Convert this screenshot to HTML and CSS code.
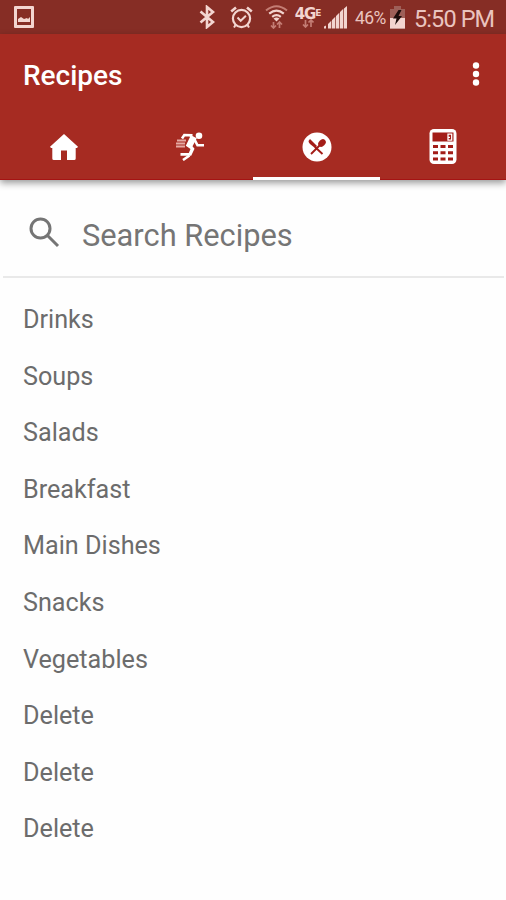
FILE: index.html
```html
<!DOCTYPE html>
<html lang="en">
<head>
<meta charset="utf-8">
<title>Recipes</title>
<link rel="stylesheet" href="styles.css">
</head>
<body>
<div class="status">
  <svg class="pic" width="20" height="22" viewBox="0 0 20 22"><path fill-rule="evenodd" d="M1 0h18q1 0 1 1v20q0 1-1 1H1q-1 0-1-1V1q0-1 1-1zM3 3v16h14V3z"/><path d="M4 16v-3l3-2 3 2 3-1 1 1 2-2v5z"/></svg>
  <svg class="bt" width="16" height="24" viewBox="0 0 16 24"><path class="line" stroke-width="2.600" d="M1.500 6.500 14 17l-6 5V2l6 5L1.500 17.500"/></svg>
  <svg class="alarm" width="23" height="23" viewBox="0 0 23 23"><circle class="line" stroke-width="2.200" cx="11.500" cy="12.500" r="8.600"/><path class="line" stroke-width="2.600" d="M1.200 5.500 6 1.600M21.800 5.500 17 1.600"/><path class="line" stroke-width="2" d="m7.500 11.500 3.200 3.300 5.200-5M5.500 19 4 21.500M17.500 19l1.500 2.500"/></svg>
  <svg class="wifi" width="23" height="24" viewBox="0 0 23 24"><path class="line dim" stroke-width="2" d="M1 5.500Q11.500-3 22 5.500"/><path class="line" stroke-width="2.200" d="M4.200 8.700q7.300-6 14.600 0M7.200 11.800q4.300-3.500 8.600 0"/><path d="m8.500 13.500 3 3 3-3q-3-2-6 0z"/><path class="line dim" stroke-width="1.700" d="M8.500 17v6M6 20.500 8.500 23l2.500-2.500M14.500 23v-6M12 19.500l2.500-2.500 2.500 2.500"/></svg>
  <div class="network">
    <span class="net-label">4G<span class="lte">E</span></span>
    <svg width="12" height="9" viewBox="0 0 12 9"><path class="line dim" stroke-width="1.700" d="M3.500 1v7M1 5.500 3.500 8 6 5.500M9 8V1M6.500 3.500 9 1l2.500 2.500"/></svg>
  </div>
  <svg class="signal" width="23" height="23" viewBox="0 0 23 23"><path d="M0 22.500v-2l2-1v3zM4 22.500V18l3.300-3.200v7.700zM8 22.500V14l3.300-3.200v11.700zM12 22.500V10l3.300-3.200v15.700zM16 22.500V6l3.300-3.200v19.700zM20 22.500V2.500L23 0v22.500z"/></svg>
  <span class="percent">46%</span>
  <svg class="battery" width="15" height="23" viewBox="0 0 15 23"><path class="shell" d="M4 0h7v3h4v20H0V3h4z"/><path d="M0 12h15v10.500H0z"/><path class="bolt" d="M8.500 4 3 12.500h3.500L5 19l7-9H8.500l3-6z"/></svg>
  <span class="time">5:50 PM</span>
</div>
<header class="appbar">
  <div class="titlebar">
    <h1>Recipes</h1>
    <svg width="10" height="26" viewBox="0 0 10 26"><circle cx="5" cy="4.500" r="3.200"/><circle cx="5" cy="13" r="3.200"/><circle cx="5" cy="21.500" r="3.200"/></svg>
  </div>
  <nav class="tabs">
    <div class="tab"><svg width="28" height="26" viewBox="0 0 28 26"><path d="M14 0 28 12.700 27 14h-1.300v10.500q0 1.500-1.500 1.500H17v-9.500h-6V26H3.800q-1.500 0-1.500-1.500V14H1l-1-1.300z"/></svg></div>
    <div class="tab"><svg class="runner" width="29" height="29" viewBox="0 0 29 29"><circle cx="23" cy="3.700" r="3.300"/><path class="line" stroke-width="2.600" d="M6 6.500 8.300 3l8.200.4"/><path d="m13 2.200 7.800 4-4.300 8 2 2.500-3.300 7H4.500V21h8.300l1.700-4-4.700-3.300L14 5z"/><path class="line" stroke-width="2.600" d="m18 6.500 3.500 6.800H28M13.500 23.500 7 28"/><path class="line tail" stroke-width="2" d="M1 8.500h9M0 11.500h9M0 14.500h9"/></svg></div>
    <div class="tab active"><svg width="30" height="30" viewBox="0 0 30 30"><circle cx="15" cy="15" r="14.500"/><path class="red-line" stroke-width="1.900" d="m9 22 9-9M13 15l7.500 7"/><path class="red" d="m6.500 9 1.500-2 7 7-2 2-5-4q-1.500-1.500-1.500-3z"/><ellipse class="red" cx="20" cy="11" rx="3.200" ry="4.200" transform="rotate(45 20 11)"/></svg></div>
    <div class="tab"><svg class="calc" width="28" height="35" viewBox="0 0 28 35"><rect x=".5" width="27" height="35" rx="4.500"/><path class="red" d="M3.500 3.500h21v9h-21zM4 16h5v3H4zM11.500 16h5v3h-5zM19 16h5v3h-5zM4 22.200h5v3H4zM11.500 22.200h5v3h-5zM19 22.200h5v3h-5zM4 28.600h5v3H4zM11.500 28.600h5v3h-5zM19 28.600h5v3h-5z"/><path class="line" stroke-width="1.300" d="M19 5.200h3.700v6H19zM19 8.400h2"/></svg></div>
  </nav>
</header>
<main>
  <div class="search">
    <svg width="31" height="31" viewBox="0 0 31 31"><circle cx="11.500" cy="11.500" r="9.500"/><path d="m18.500 18.500 10.500 10.500"/></svg>
    <span>Search Recipes</span>
  </div>
  <ul>
    <li>Drinks</li>
    <li>Soups</li>
    <li>Salads</li>
    <li>Breakfast</li>
    <li>Main Dishes</li>
    <li>Snacks</li>
    <li>Vegetables</li>
    <li>Delete</li>
    <li>Delete</li>
    <li>Delete</li>
  </ul>
</main>
</body>
</html>
```
FILE: styles.css
```css
* { box-sizing: border-box; }
body {
  margin: 0;
  height: 900px;
  overflow: hidden;
  background: #fefefe;
  font-family: Roboto, sans-serif;
  color: #6c6c6c;
}
svg { display: block; flex: none; }
.status {
  display: flex;
  align-items: flex-start;
  height: 34px;
  padding: 6px 0 0 14px;
  background: #862d25;
  color: #eac4bf;
  white-space: nowrap;
}
.status svg { fill: #f3d5d0; }
.status .line { fill: none; stroke: #f3d5d0; }
.status .dim { stroke: #c47d74; }
.status .shell { fill: #9e5f58; }
.status .bolt { fill: #1c0c0b; }
.bt { margin: -1px 0 0 165px; }
.alarm { margin-left: 15px; }
.wifi { margin: -1px 0 0 12px; }
.network {
  display: flex;
  flex: none;
  flex-direction: column;
  align-items: center;
  width: 27px;
  margin-left: 6px;
}
.net-label {
  height: 13px;
  line-height: 14px;
  font-family: "DejaVu Sans", sans-serif;
  font-size: 15px;
  font-weight: 700;
  letter-spacing: -1.2px;
  color: #f3d5d0;
}
.lte { font-size: 9px; vertical-align: 3px; }
.signal { margin-left: 3px; }
.percent {
  flex: none;
  width: 35px;
  margin-left: 8px;
  font-size: 17.5px;
  letter-spacing: -.6px;
  line-height: 25px;
}
.time {
  margin-left: 9px;
  font-size: 23.5px;
  letter-spacing: -.9px;
  line-height: 26px;
}
.appbar {
  position: relative;
  height: 146px;
  background: #a62b22;
  border-bottom: 1px solid #a51313;
  box-shadow: 0 3px 7px rgba(0, 0, 0, .4);
}
.appbar svg { fill: #fff; }
.appbar .line { fill: none; stroke: #fff; }
.appbar .tail { stroke: #e5aaa3; }
.appbar .red { fill: #a31d18; }
.red-line { stroke: #a31d18; }
.titlebar {
  display: flex;
  align-items: center;
  justify-content: space-between;
  height: 79px;
  padding: 0 25px 0 23px;
}
h1 {
  margin: 4px 0 0;
  font-size: 28px;
  line-height: 32px;
  font-weight: 500;
  color: #fff;
}
.tabs { display: grid; grid-template-columns: repeat(4, 1fr); height: 67px; }
.tab {
  display: flex;
  align-items: center;
  justify-content: center;
  padding: 4px 0 0 1px;
  border-bottom: 3px solid transparent;
}
.active { border-color: #fff; }
.runner { margin-top: -2px; }
.calc { margin-top: -1px; }
.search {
  display: flex;
  height: 98px;
  margin: 0 2px 0 3px;
  padding: 37px 0 0 26px;
  border-bottom: 2px solid #e9e9e9;
}
.search svg { fill: none; stroke: #757575; stroke-width: 3px; }
.search span {
  margin: 1px 0 0 22px;
  color: #757575;
  font-size: 30.8px;
  line-height: 36px;
}
ul { margin: 0; padding: 14.1px 0 0 23px; list-style: none; }
li { height: 56.6px; font-size: 25.2px; line-height: 56.6px; }
```
